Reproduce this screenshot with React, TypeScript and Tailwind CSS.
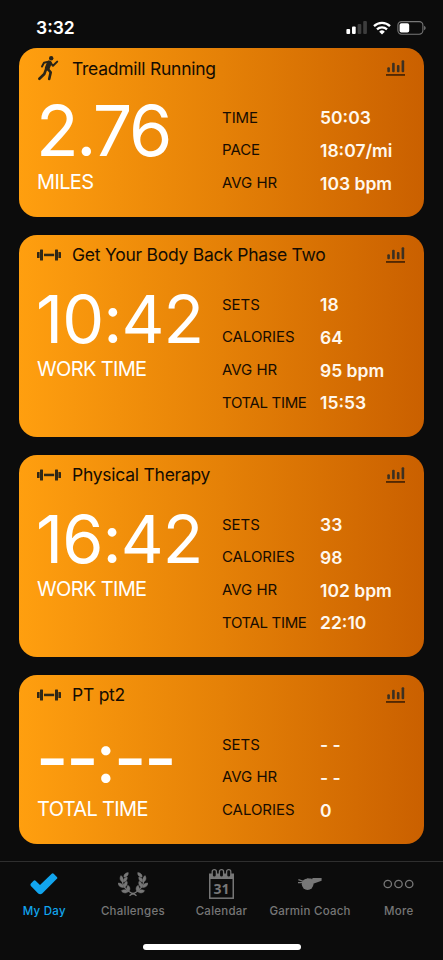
import React from 'react';

type Stat = [string, string];

interface Activity {
  title: string;
  icon: 'run' | 'weights';
  value: string;
  label: string;
  stats: Stat[];
  height: string;
  titleClass: string;
  valueClass: string;
}

const activities: Activity[] = [
  {
    title: 'Treadmill Running',
    icon: 'run',
    value: '2.76',
    label: 'MILES',
    stats: [['TIME', '50:03'], ['PACE', '18:07/mi'], ['AVG HR', '103 bpm']],
    height: 'h-[169px]',
    titleClass: 'pt-px',
    valueClass: 'text-[70px] tracking-[-2.5px] -ml-px pt-[2px]',
  },
  {
    title: 'Get Your Body Back Phase Two',
    icon: 'weights',
    value: '10:42',
    label: 'WORK TIME',
    stats: [['SETS', '18'], ['CALORIES', '64'], ['AVG HR', '95 bpm'], ['TOTAL TIME', '15:53']],
    height: 'h-[202px]',
    titleClass: '',
    valueClass: 'text-[66.5px] tracking-[-0.9px] -ml-px pt-[4px]',
  },
  {
    title: 'Physical Therapy',
    icon: 'weights',
    value: '16:42',
    label: 'WORK TIME',
    stats: [['SETS', '33'], ['CALORIES', '98'], ['AVG HR', '102 bpm'], ['TOTAL TIME', '22:10']],
    height: 'h-[202px]',
    titleClass: '',
    valueClass: 'text-[66.5px] tracking-[-0.9px] -ml-px pt-[4px]',
  },
  {
    title: 'PT pt2',
    icon: 'weights',
    value: '--:--',
    label: 'TOTAL TIME',
    stats: [['SETS', '- -'], ['AVG HR', '- -'], ['CALORIES', '0']],
    height: 'h-[169px]',
    titleClass: '',
    valueClass: 'text-[70px]',
  },
];

function RunIcon() {
  return (
    <svg width="22" height="26" viewBox="0 0 22 26" fill="none" stroke="#292418" strokeLinecap="round" strokeLinejoin="round">
      <circle cx="13.2" cy="3.2" r="2.2" fill="#292418" stroke="none" />
      <path d="M11.3 8 9.3 13" strokeWidth="4.8" />
      <path d="M10.5 6.6 6 7.8 4 11.5" strokeWidth="2" />
      <path d="m12.7 8 2.3 2.8 4.2-4.2" strokeWidth="2" />
      <path d="m9.8 14 2.9 3.4-1.5 6.6" strokeWidth="2.6" />
      <path d="m8 14.4-1.7 4.6-4.9 4.8" strokeWidth="2.6" />
    </svg>
  );
}

function DumbbellIcon() {
  return (
    <svg width="24" height="12" viewBox="0 0 24 12" fill="#302817">
      <rect x="0" y="3" width="2.6" height="6" rx=".5" />
      <rect x="3" y=".5" width="3" height="11" rx=".6" />
      <rect x="7" y="4.7" width="10.2" height="2.5" />
      <rect x="18" y=".5" width="3" height="11" rx=".6" />
      <rect x="21.4" y="3" width="2.6" height="6" rx=".5" />
    </svg>
  );
}

function ChartIcon() {
  return (
    <svg width="19" height="17" viewBox="0 0 19 17" fill="#3c3021">
      <rect x="1.3" y="7.3" width="2.6" height="5" rx="1" />
      <rect x="6.1" y="2.7" width="2.6" height="9.6" rx="1" />
      <rect x="10.9" y="5" width="2.6" height="7.3" rx="1" />
      <rect x="15.6" y=".3" width="2.6" height="12" rx="1" />
      <rect x="0" y="14.2" width="19" height="1.5" fill="#351a03" />
    </svg>
  );
}

function ActivityCard({ item }: { item: Activity }) {
  return (
    <section className={`w-[405px] shrink-0 rounded-[18px] bg-linear-to-r from-[#ff9f0f] via-[#e58107] to-[#ca6000] ${item.height}`}>
      <header className="flex h-[41px] items-center">
        <div className="ml-[17.5px] flex w-[35.5px] items-center">
          {item.icon === 'run' ? <div className="ml-px -mt-px"><RunIcon /></div> : <div className="-mt-px"><DumbbellIcon /></div>}
        </div>
        <h2 className={`flex-1 whitespace-nowrap text-[17.5px] tracking-[-0.25px] text-[#140c02] ${item.titleClass}`}>{item.title}</h2>
        <div className="mr-[19px]"><ChartIcon /></div>
      </header>
      <div className="flex">
        <div className="w-[203px] pl-[18px] text-white">
          <div className={`flex h-[82px] items-center whitespace-nowrap font-[370] leading-none ${item.valueClass}`}>
            {item.value === '--:--' ? <Placeholder /> : item.value}
          </div>
          <div className="text-[20px] font-[370] leading-[22px] tracking-[-0.65px]">{item.label}</div>
        </div>
        <dl className="pt-[12.5px]">
          {item.stats.map(([name, value]) => (
            <div key={name} className="flex h-[32.7px] items-center">
              <dt className={`w-[98px] whitespace-nowrap text-[15px] text-[#170c01] ${name === 'TOTAL TIME' ? 'tracking-[-0.35px]' : 'tracking-[-0.05px]'}`}>{name}</dt>
              <dd className="whitespace-nowrap text-[17.5px] font-semibold leading-[21px] text-[#fff8ee]">{value}</dd>
            </div>
          ))}
        </dl>
      </div>
    </section>
  );
}

function Placeholder() {
  return (
    <span className="-ml-px flex items-center pt-[2px] text-[70px] font-medium">
      <span className="tracking-[-2.2px]">--</span>
      <span className="-ml-[0.5px] mr-[-2px] font-normal">:</span>
      <span className="tracking-[-2.2px]">--</span>
    </span>
  );
}

function StatusBar() {
  return (
    <div className="flex h-12 items-center justify-between pl-[36px] pr-[17px] pt-[7px] text-white">
      <time className="pt-px text-[17.5px] font-semibold">3:32</time>
      <div className="flex items-center gap-[6px]">
        <svg width="21" height="13" viewBox="0 0 21 13" fill="#fff">
          <rect x="0.4" y="8" width="3.7" height="5" rx="1" />
          <rect x="6" y="5.6" width="3.7" height="7.4" rx="1" />
          <rect x="11.6" y="3" width="3.7" height="10" rx="1" fill="#3d3d3d" />
          <rect x="17.2" y="0" width="3.7" height="13" rx="1" fill="#3d3d3d" />
        </svg>
        <svg width="18" height="14" viewBox="0 0 18 14" fill="none" stroke="#fff" strokeWidth="2.3">
          <path d="M1 5.1a11.5 11.5 0 0 1 16 0" />
          <path d="M4 8.3a7.2 7.2 0 0 1 10 0" />
          <path d="M9 13.5 6.2 10.7a4 4 0 0 1 5.6 0Z" fill="#fff" stroke="none" />
        </svg>
        <svg width="29" height="14" viewBox="0 0 29 14">
          <rect x=".9" y=".6" width="25" height="12.6" rx="3.6" fill="none" stroke="#777" strokeWidth="1.1" />
          <rect x="2.6" y="2.3" width="9.6" height="9.2" rx="1.8" fill="#fff" />
          <path d="M27.1 4.8c2 .8 2 3.6 0 4.4Z" fill="#777" />
        </svg>
      </div>
    </div>
  );
}

function CheckIcon() {
  return (
    <svg width="28" height="24" viewBox="0 0 28 24" fill="#12a5ee">
      <path d="M.9 11.5 3.6 8.8q1-.9 2 0l4.4 4.1L21.7 1.8q1-.9 2 0l3.2 3.1q.9 1 0 1.9L12.2 21.5q-2 1.4-4 0L.9 14q-1-1.2 0-2.5Z" />
    </svg>
  );
}

function LaurelIcon() {
  const branch = (
    <>
      <path d="M6 6.2C5.4 4 7.3 1.7 10.2 1.5 10.7 3.8 9 6.1 6 6.2Z" />
      <path d="M4.5 11C1.7 9.7 1.4 6.8 3 4.6 5 6 5.8 8.7 4.5 11Z" />
      <path d="M5.4 11.2c-.8-2.2.6-4.5 3.8-5.1.3 2.7-1.2 4.8-3.8 5.1Z" />
      <path d="M5.8 16.4C2.5 16.9.4 15 0 12.1c3-.3 5.3 1.3 5.8 4.3Z" />
      <path d="M6.4 16.2c-1.2-2.3-.3-4.7 2.6-5.9.8 2.6-.1 4.8-2.6 5.9Z" />
      <path d="M10.4 20.6c-2.4 2.2-5.6 1.5-7-.9 2.3-1.6 5.3-1.3 7 .9Z" />
      <path d="M11.1 20.3c-2.5-1.1-3-3.8-1.2-6.1 2.2 1.6 2.7 4 1.2 6.1Z" />
      <path d="M4.2 7c-.5 6.5 3 12.2 11.5 16.2" fill="none" stroke="#777" strokeWidth="1.1" />
    </>
  );
  return (
    <svg width="30" height="26" viewBox="0 0 30 26" fill="#777">
      <g stroke="#777" strokeWidth=".5">{branch}</g>
      <g stroke="#777" strokeWidth=".5" transform="matrix(-1 0 0 1 30 0)">{branch}</g>
      <path d="m11.5 24.8 3.5-2.6 3.5 2.6" fill="none" stroke="#777" strokeWidth="1.4" />
    </svg>
  );
}

function CalendarIcon() {
  return (
    <div className="relative h-[30px] w-[25px]">
      <svg width="25" height="30" viewBox="0 0 25 30" fill="none" stroke="#777">
        <path d="M0 4.5h25V10H0Z" fill="#777" stroke="none" />
        <rect x=".75" y="8" width="23.5" height="21.2" strokeWidth="1.5" />
        <g fill="#0d0d0d" strokeWidth="1.3">
          <rect x="3.2" y=".7" width="4.2" height="7.5" rx="2" />
          <rect x="10.4" y=".7" width="4.2" height="7.5" rx="2" />
          <rect x="17.6" y=".7" width="4.2" height="7.5" rx="2" />
        </g>
      </svg>
      <span className="absolute inset-x-0 top-[12px] text-center font-['Open_Sans'] text-[14px] font-bold leading-[15px]">31</span>
    </div>
  );
}

function WhistleIcon() {
  return (
    <svg width="24" height="14" viewBox="0 0 24 14" fill="#777">
      <circle cx="9.6" cy="7.2" r="5.8" />
      <path d="M9 1.4h4.4l.6 1 .6-1.4h9v2.7l-8.4 3.1-1.4 3L9 8Z" />
      <path d="m.4 2.6 5 1.7M0 5.6h5" fill="none" stroke="#777" strokeWidth="1.4" />
    </svg>
  );
}

function MoreIcon() {
  return (
    <svg width="31" height="10" viewBox="0 0 31 10" fill="none" stroke="#777" strokeWidth="1.3">
      <circle cx="4.8" cy="5" r="3.7" />
      <circle cx="15.5" cy="5" r="3.7" />
      <circle cx="26.2" cy="5" r="3.7" />
    </svg>
  );
}

const tabs = [
  { name: 'My Day', icon: <CheckIcon />, color: 'text-[#12a5ee]' },
  { name: 'Challenges', icon: <LaurelIcon />, color: 'text-[#777]' },
  { name: 'Calendar', icon: <CalendarIcon />, color: 'text-[#777]' },
  { name: 'Garmin Coach', icon: <WhistleIcon />, color: 'text-[#777]' },
  { name: 'More', icon: <MoreIcon />, color: 'text-[#777]' },
];

export default function App() {
  return (
    <main className="flex h-[960px] w-[443px] flex-col overflow-hidden bg-[#0c0c0c] font-['Inter',sans-serif]">
      <StatusBar />
      <div className="flex h-[813px] flex-col items-center gap-[18px]">
        {activities.map((item) => <ActivityCard key={item.title} item={item} />)}
      </div>
      <nav className="flex h-[99px] flex-col border-t border-[#2f2f2f]">
        <div className="grid grid-cols-5">
          {tabs.map((tab) => (
            <div key={tab.name} className={`flex flex-col items-center ${tab.color}`}>
              <div className="flex h-[43px] items-center">{tab.icon}</div>
              <span className="whitespace-nowrap text-[11.5px] font-medium leading-3 tracking-[0.25px]">{tab.name}</span>
            </div>
          ))}
        </div>
        <div className="mx-auto mt-[27px] h-[6px] w-[158px] rounded-full bg-white" />
      </nav>
    </main>
  );
}
